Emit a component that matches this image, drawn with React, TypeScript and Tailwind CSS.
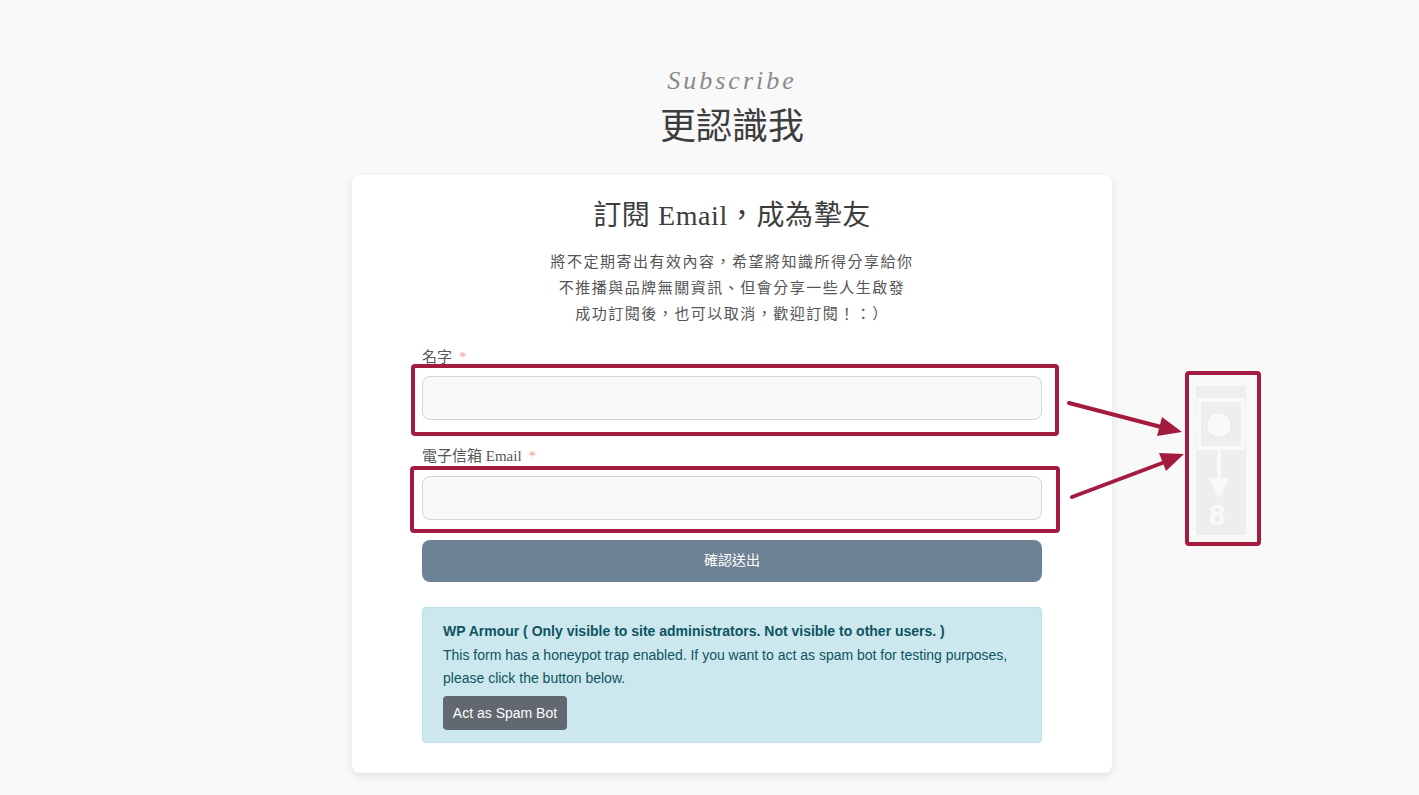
const cjk = "font-['Liberation_Serif','Noto_Sans_CJK_TC',serif]";

function Field({ label, mt, gap }: { label: string; mt: string; gap: string }) {
  return (
    <div className={mt}>
      <label className="flex h-[19px] items-center text-[15px] leading-[19px] text-[#555]">
        {label}
        <span className="ml-[7px] text-[#f59a9a]">*</span>
      </label>
      <input
        type="text"
        className={`${gap} block h-[44px] w-full rounded-lg border border-[#d6d6d6] bg-[#f9f9f9]`}
      />
    </div>
  );
}

function SpamNotice() {
  return (
    <div className="mt-[25px] h-[136px] rounded border border-[#b9e2ea] bg-[#cce8ee] px-5 py-[12px] font-['Liberation_Sans',sans-serif] text-sm leading-[23.5px] text-[#0c5460]">
      <p className="font-bold">WP Armour ( Only visible to site administrators. Not visible to other users. )</p>
      <p>This form has a honeypot trap enabled. If you want to act as spam bot for testing purposes, please click the button below.</p>
      <button className="mt-[5px] block h-[34px] w-[124px] rounded bg-[#62686f] text-sm text-white">Act as Spam Bot</button>
    </div>
  );
}

// red boxes, arrows and the sidebar mockup sit on top of the page
function Annotations() {
  return (
    <>
      <div className="absolute left-[411px] top-[364px] h-[72px] w-[648px] rounded-sm border-4 border-[#a31c3f]" />
      <div className="absolute left-[410px] top-[466px] h-[67px] w-[650px] rounded-sm border-4 border-[#a31c3f]" />
      <div className="absolute left-[1185px] top-[371px] h-[175px] w-[76px] rounded-sm border-4 border-[#a31c3f]" />
      <svg className="absolute left-0 top-0" width="1419" height="795" fill="none">
        <path d="M1069 403L1165 428" stroke="#a31c3f" strokeWidth="4" strokeLinecap="round" />
        <path d="M1182 432L1162 417L1157 436Z" fill="#a31c3f" />
        <path d="M1072 497L1165 462" stroke="#a31c3f" strokeWidth="4" strokeLinecap="round" />
        <path d="M1184 454L1159 453L1166 471Z" fill="#a31c3f" />
        <rect x="1196" y="386" width="50" height="149" fill="#eeeeee" />
        <rect x="1199" y="400" width="44" height="48" stroke="#f9f9f9" strokeWidth="4" />
        <rect x="1196" y="418" width="2" height="14" fill="#f9f9f9" />
        <circle cx="1219" cy="425" r="12.5" fill="#f9f9f9" stroke="#e6e6e6" strokeWidth="1" />
        <path d="M1219 449V478" stroke="#f9f9f9" strokeWidth="4" />
        <path d="M1209 478H1229L1219 498Z" fill="#f9f9f9" />
        <text x="1217" y="525" textAnchor="middle" fontFamily="Liberation Sans, sans-serif" fontWeight="700" fontSize="29" fill="#f9f9f9">8</text>
      </svg>
    </>
  );
}

export default function App() {
  return (
    <div className={`relative h-[795px] overflow-hidden bg-[#f9f9f9] pl-[45px] pt-[67px] ${cjk}`}>
      <div className="text-center">
        <p className="h-[28px] font-['Liberation_Serif',serif] text-[26px] italic leading-[28px] tracking-[3px] text-[#8a8a8a]">Subscribe</p>
        <h2 className="h-[60px] pt-[2px] text-[36px] leading-[60px] text-[#3d3d3d]">更認識我</h2>
      </div>

      <div className="mx-auto mt-[20px] h-[598px] w-[760px] rounded-lg bg-white px-[70px] pt-[21px] shadow-[0_3px_10px_rgba(0,0,0,0.1)]">
        <h3 className="text-center text-[28px] leading-[40px] tracking-[0.6px] text-[#3d3d3d]">訂閱 Email，成為摯友</h3>
        <div className="mt-[13px] text-center text-[15px] leading-[26px] tracking-[1.5px] text-[#555]">
          <p>將不定期寄出有效內容，希望將知識所得分享給你</p>
          <p>不推播與品牌無關資訊、但會分享一些人生啟發</p>
          <p>成功訂閱後，也可以取消，歡迎訂閱！：）</p>
        </div>

        <Field label="名字" mt="mt-[21px]" gap="mt-[9px]" />
        <Field label="電子信箱 Email" mt="mt-[27px]" gap="mt-[10px]" />

        <button className="mt-[20px] block h-[42px] w-full rounded-lg bg-[#6e8296] text-sm text-white">確認送出</button>

        <SpamNotice />
      </div>

      <Annotations />
    </div>
  );
}
